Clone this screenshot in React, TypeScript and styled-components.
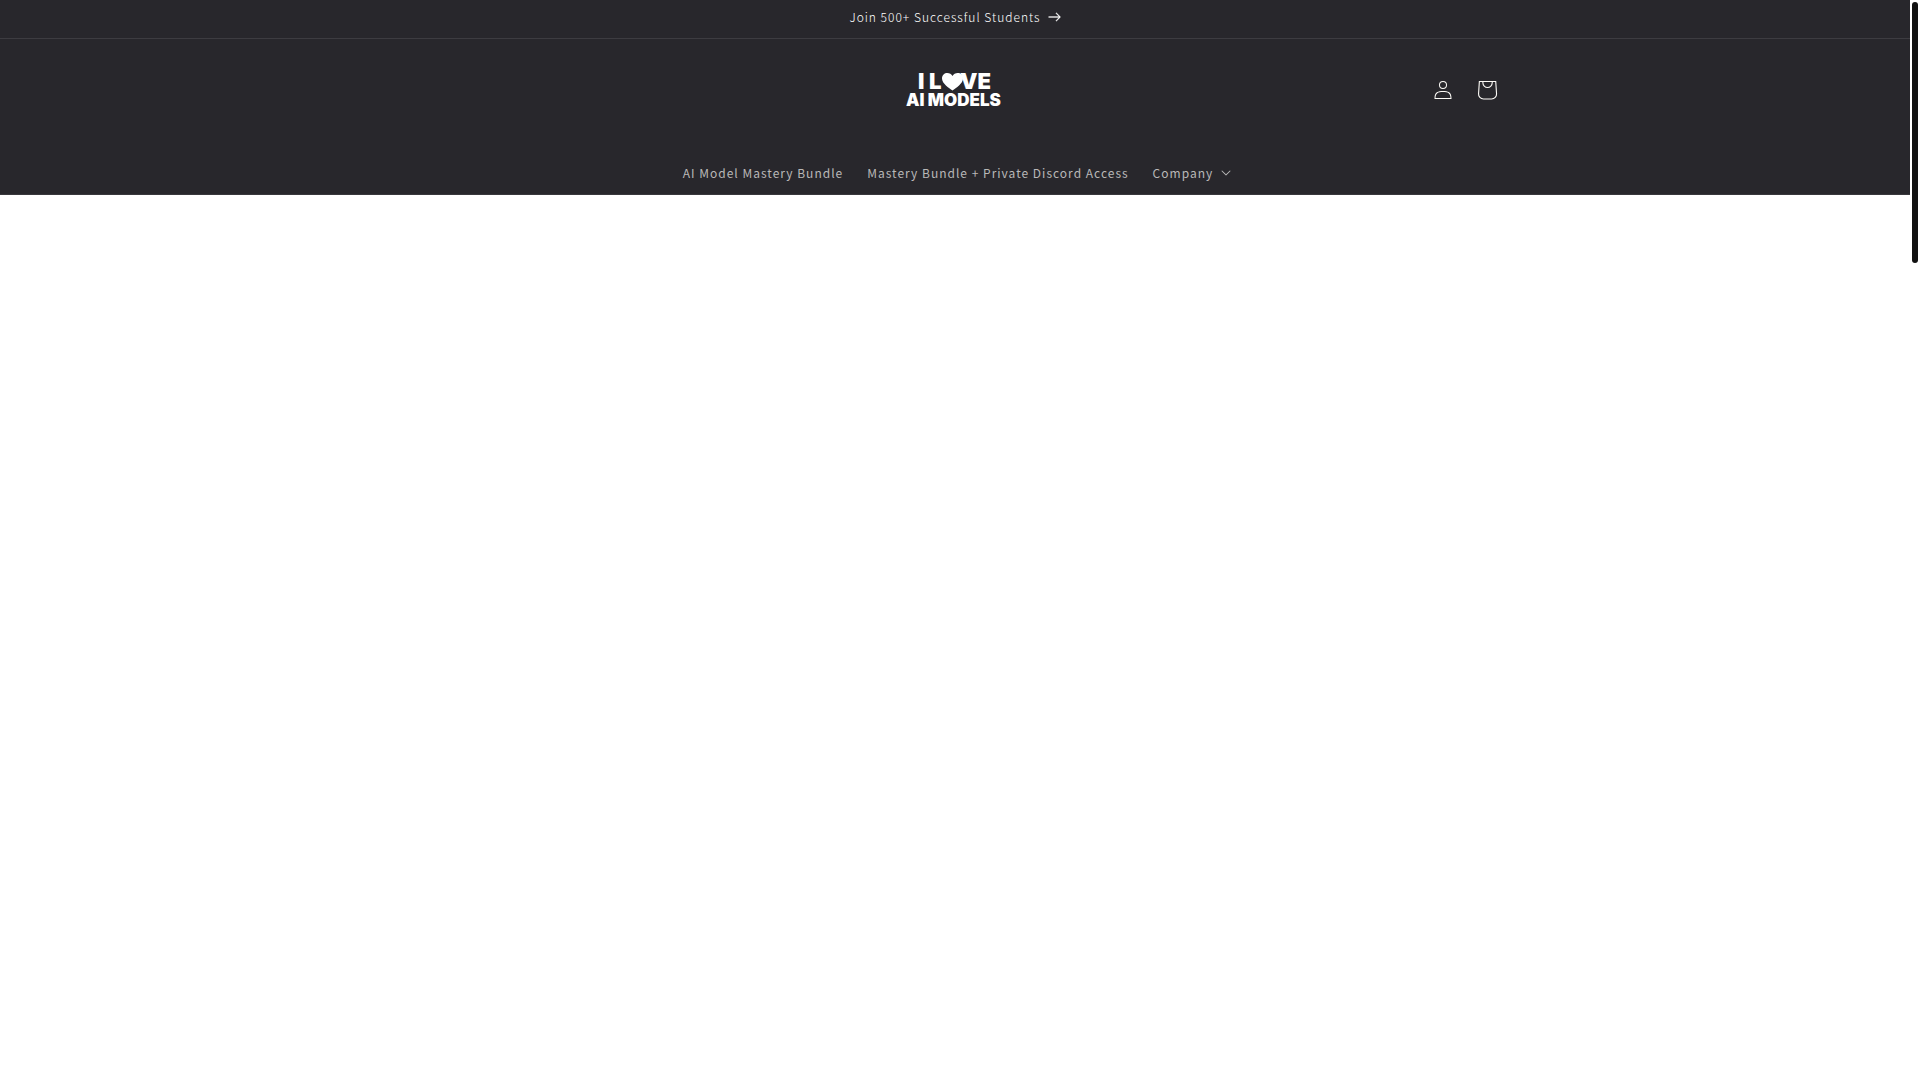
import React from "react";
import styled, { createGlobalStyle } from "styled-components";

const GlobalStyle = createGlobalStyle`
  *, *::before, *::after { box-sizing: border-box; }
  html, body { margin: 0; background: #ffffff; }
  html { scrollbar-width: none; }
  body {
    font-family: "Noto Sans CJK SC", "Noto Sans", sans-serif;
    font-weight: 400;
  }
  a { color: inherit; text-decoration: none; }
`;

const Page = styled.div`
  display: flex;
  min-height: 100vh;
`;

const Content = styled.div`
  flex: 1;
  min-width: 0;
`;

const ScrollTrack = styled.div`
  width: 10px;
  flex: none;
  padding: 2px;
  background: #ffffff;
`;

const ScrollThumb = styled.div`
  height: 261px;
  border-radius: 3px;
  background: #111111;
`;

const Announcement = styled.div`
  display: flex;
  justify-content: center;
  height: 39px;
  padding-bottom: 5px;
  background: #28272c;
  border-bottom: 1px solid #3d3c41;
`;

const AnnouncementLink = styled.a`
  display: flex;
  align-items: center;
  gap: 7px;
  color: #ffffff;
  font-size: 12px;
  line-height: 18px;
  font-weight: 300;
  letter-spacing: 1px;
`;

const Header = styled.header`
  background: #28272c;
  border-bottom: 1px solid #39383d;
`;

const HeaderInner = styled.div`
  max-width: 1200px;
  margin: 0 auto;
  padding: 0 46px;
`;

const TopRow = styled.div`
  display: grid;
  grid-template-columns: 1fr auto 1fr;
  align-items: center;
  height: 102px;
`;

const LogoLink = styled.a`
  grid-column: 2;
  display: block;
  line-height: 0;
`;

const LogoText = styled.text<{ $size: number }>`
  font-family: Inter, "Liberation Sans", sans-serif;
  font-weight: 900;
  font-size: ${(p) => p.$size}px;
  fill: #ffffff;
`;

const Actions = styled.div`
  display: flex;
  justify-content: flex-end;
`;

const ActionLink = styled.a`
  display: flex;
  align-items: center;
  justify-content: center;
  width: 44px;
  height: 44px;
  color: #fdfbf7;
`;

const Nav = styled.nav`
  display: flex;
  justify-content: center;
  height: 53px;
  padding: 12px 0 2px;
`;

const navItem = `
  display: flex;
  align-items: center;
  padding: 0 12px;
  color: #b9b8b8;
  font-family: inherit;
  font-size: 12px;
  letter-spacing: 1px;
`;

const NavLink = styled.a`
  ${navItem}
`;

const NavButton = styled.button`
  ${navItem}
  gap: 8px;
  padding-right: 8px;
  border: 0;
  background: none;
  cursor: pointer;
`;

const links = ["AI Model Mastery Bundle", "Mastery Bundle + Private Discord Access"];

export default function App() {
  return (
    <>
      <GlobalStyle />
      <Page>
        <Content>
          <Announcement>
            <AnnouncementLink href="#">
              Join 500+ Successful Students
              <svg width="13" height="10" viewBox="0 0 14 10" fill="currentColor" aria-hidden="true">
                <path
                  fillRule="evenodd"
                  clipRule="evenodd"
                  stroke="currentColor"
                  strokeWidth="0.3"
                  d="M8.537.808a.5.5 0 01.817-.162l4 4a.5.5 0 010 .708l-4 4a.5.5 0 11-.708-.708L11.793 5.5H1a.5.5 0 010-1h10.793L8.646 1.354a.5.5 0 01-.109-.546z"
                />
              </svg>
            </AnnouncementLink>
          </Announcement>
          <Header>
            <HeaderInner>
              <TopRow>
                <LogoLink href="#" aria-label="I Love AI Models">
                  <svg width="104" height="60" viewBox="-2 -10 104 60">
                    <LogoText $size={22} x="13" y="19">I</LogoText>
                    <LogoText $size={22} x="24" y="19">L</LogoText>
                    <path
                      fill="#ffffff"
                      d="M47.500 20.500C44 18 37 13.500 37 8.500C37 5 39.500 3 42.300 3C44.500 3 46.500 4 47.500 6C48.500 4 50.500 3 52.700 3C55.500 3 58 5 58 8.500C58 13.500 51 18 47.500 20.500Z"
                    />
                    <LogoText $size={22} x="55" y="19">VE</LogoText>
                    <LogoText $size={17} x="1" y="36">AI MODELS</LogoText>
                  </svg>
                </LogoLink>
                <Actions>
                  <ActionLink href="#" aria-label="Log in">
                    <svg width="18" height="20" viewBox="0 0 18 19" fill="currentColor">
                      <path
                        fillRule="evenodd"
                        clipRule="evenodd"
                        d="M6 4.5a3 3 0 116 0 3 3 0 01-6 0zm3-4a4 4 0 100 8 4 4 0 000-8zm5.58 12.15c1.120.820 1.830 2.240 1.910 4.850H1.510c.080-2.600.790-4.030 1.900-4.850C4.660 11.750 6.500 11.500 9 11.500s4.350.260 5.580 1.150zM9 10.500c-2.500 0-4.650.240-6.170 1.350C1.270 12.980.500 14.930.500 18v.500h17V18c0-3.070-.770-5.020-2.330-6.150-1.520-1.100-3.670-1.350-6.170-1.350z"
                      />
                    </svg>
                  </ActionLink>
                  <ActionLink href="#" aria-label="Cart">
                    <svg width="44" height="44" viewBox="0 0 40 40" fill="currentColor">
                      <path
                        fillRule="evenodd"
                        d="M15.750 11.800h-3.160l-.770 11.600a5 5 0 0 0 4.990 5.340h7.380a5 5 0 0 0 4.990-5.330l-.780-11.610zm0 1h-2.220l-.710 10.670a4 4 0 0 0 3.990 4.270h7.380a4 4 0 0 0 4-4.270l-.720-10.670h-2.220v.630a4.750 4.750 0 1 1-9.500 0zm8.500 0h-7.500v.630a3.750 3.750 0 1 0 7.500 0z"
                      />
                    </svg>
                  </ActionLink>
                </Actions>
              </TopRow>
              <Nav>
                {links.map((label) => (
                  <NavLink href="#" key={label}>{label}</NavLink>
                ))}
                <NavButton type="button">
                  Company
                  <svg width="10" height="6" viewBox="0 0 10 6" fill="currentColor" aria-hidden="true">
                    <path
                      fillRule="evenodd"
                      clipRule="evenodd"
                      d="M9.354.646a.5.5 0 00-.708 0L5 4.293 1.354.646a.5.5 0 00-.708.708l4 4a.5.5 0 00.708 0l4-4a.5.5 0 000-.708z"
                    />
                  </svg>
                </NavButton>
              </Nav>
            </HeaderInner>
          </Header>
          <main />
        </Content>
        <ScrollTrack aria-hidden="true">
          <ScrollThumb />
        </ScrollTrack>
      </Page>
    </>
  );
}
